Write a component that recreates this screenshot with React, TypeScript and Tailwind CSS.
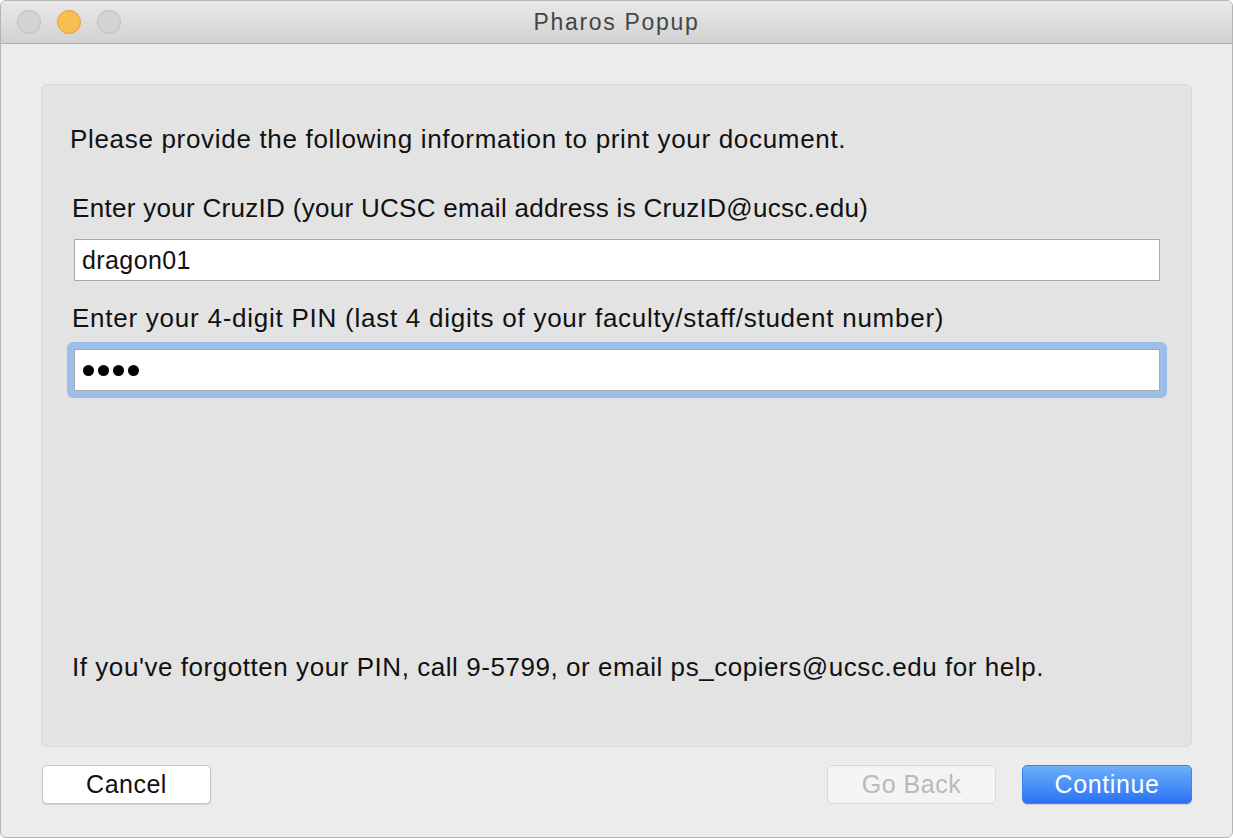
import React from "react";

const font = { fontFamily: '"Liberation Sans", Arial, sans-serif' };

function TrafficLight({ color }: { color: "gray" | "yellow" }) {
  return (
    <span
      className={
        color === "yellow"
          ? "block w-[24px] h-[24px] rounded-full bg-[#f6bf4f] border border-[#dea43b]"
          : "block w-[24px] h-[24px] rounded-full bg-[#d3d3d3] border border-[#bdbdbd]"
      }
    />
  );
}

export default function App() {
  return (
    <div className="w-[1233px] h-[838px] bg-white" style={font}>
      <div className="flex flex-col w-full h-full bg-[#ececec] border border-[#b5b5b5] rounded-[6px] overflow-hidden">
        {/* Title bar */}
        <div className="relative flex items-center h-[43px] shrink-0 bg-gradient-to-b from-[#e9e9e9] to-[#d2d2d2] border-b border-[#b0b0b0]">
          <div className="flex items-center gap-[16px] pl-[16px]">
            <TrafficLight color="gray" />
            <TrafficLight color="yellow" />
            <TrafficLight color="gray" />
          </div>
          <div className="absolute inset-0 flex items-center justify-center pointer-events-none">
            <span className="text-[23px] text-[#454545] tracking-[1.7px]">Pharos Popup</span>
          </div>
        </div>

        {/* Body */}
        <div className="flex flex-col flex-1 px-[40px] pt-[40px]">
          <div className="flex flex-col h-[663px] bg-[#e3e3e3] border border-[#dadada] rounded-[6px] pl-[28px] pr-[31px] pt-[39px] pb-[64px] text-[#111] text-[26px] leading-[30px]">
            <p className="tracking-[0.68px]">
              Please provide the following information to print your document.
            </p>

            <p className="mt-[39px] pl-[2px] tracking-[0.3px]">
              Enter your CruzID (your UCSC email address is CruzID@ucsc.edu)
            </p>
            <div className="mt-[16px] pl-[4px]">
              <input
                readOnly
                value="dragon01"
                className="w-full h-[42px] bg-white border border-[#a8a8a8] px-[7px] text-[25px] text-[#111] tracking-[0.4px] outline-none"
                style={font}
              />
            </div>

            <p className="mt-[22px] pl-[2px] tracking-[0.75px]">
              Enter your 4-digit PIN (last 4 digits of your faculty/staff/student number)
            </p>
            <div className="mt-[16px] pl-[4px]">
              <div className="relative">
                <div className="absolute -inset-[7px] rounded-[6px] bg-[#9dbdeb]" />
                <div className="relative flex items-center gap-[4px] h-[42px] bg-white border border-[#a8a8a8] pl-[8px]">
                  <span className="w-[11px] h-[11px] rounded-full bg-black" />
                  <span className="w-[11px] h-[11px] rounded-full bg-black" />
                  <span className="w-[11px] h-[11px] rounded-full bg-black" />
                  <span className="w-[11px] h-[11px] rounded-full bg-black" />
                </div>
              </div>
            </div>

            <p className="mt-auto pl-[2px] tracking-[0.55px]">
              If you've forgotten your PIN, call 9-5799, or email ps_copiers@ucsc.edu for help.
            </p>
          </div>

          {/* Buttons */}
          <div className="flex items-center mt-[18px] pl-[1px]">
            <button className="w-[169px] h-[39px] bg-white border border-[#c6c6c6] rounded-[5px] shadow-[0_1px_1px_rgba(0,0,0,0.12)] text-[25px] text-[#111] tracking-[0.5px]">
              Cancel
            </button>
            <div className="flex-1" />
            <button
              disabled
              className="w-[169px] h-[39px] bg-[#f4f4f4] border border-[#d9d9d9] rounded-[5px] text-[25px] text-[#b9b9b9] tracking-[0.5px]"
            >
              Go Back
            </button>
            <button className="ml-[26px] w-[170px] h-[39px] bg-gradient-to-b from-[#6eaefa] to-[#2a72f6] border border-[#3d80ee] rounded-[5px] shadow-[0_1px_1px_rgba(0,0,0,0.12)] text-[25px] text-white tracking-[0.6px]">
              Continue
            </button>
          </div>
        </div>
      </div>
    </div>
  );
}
